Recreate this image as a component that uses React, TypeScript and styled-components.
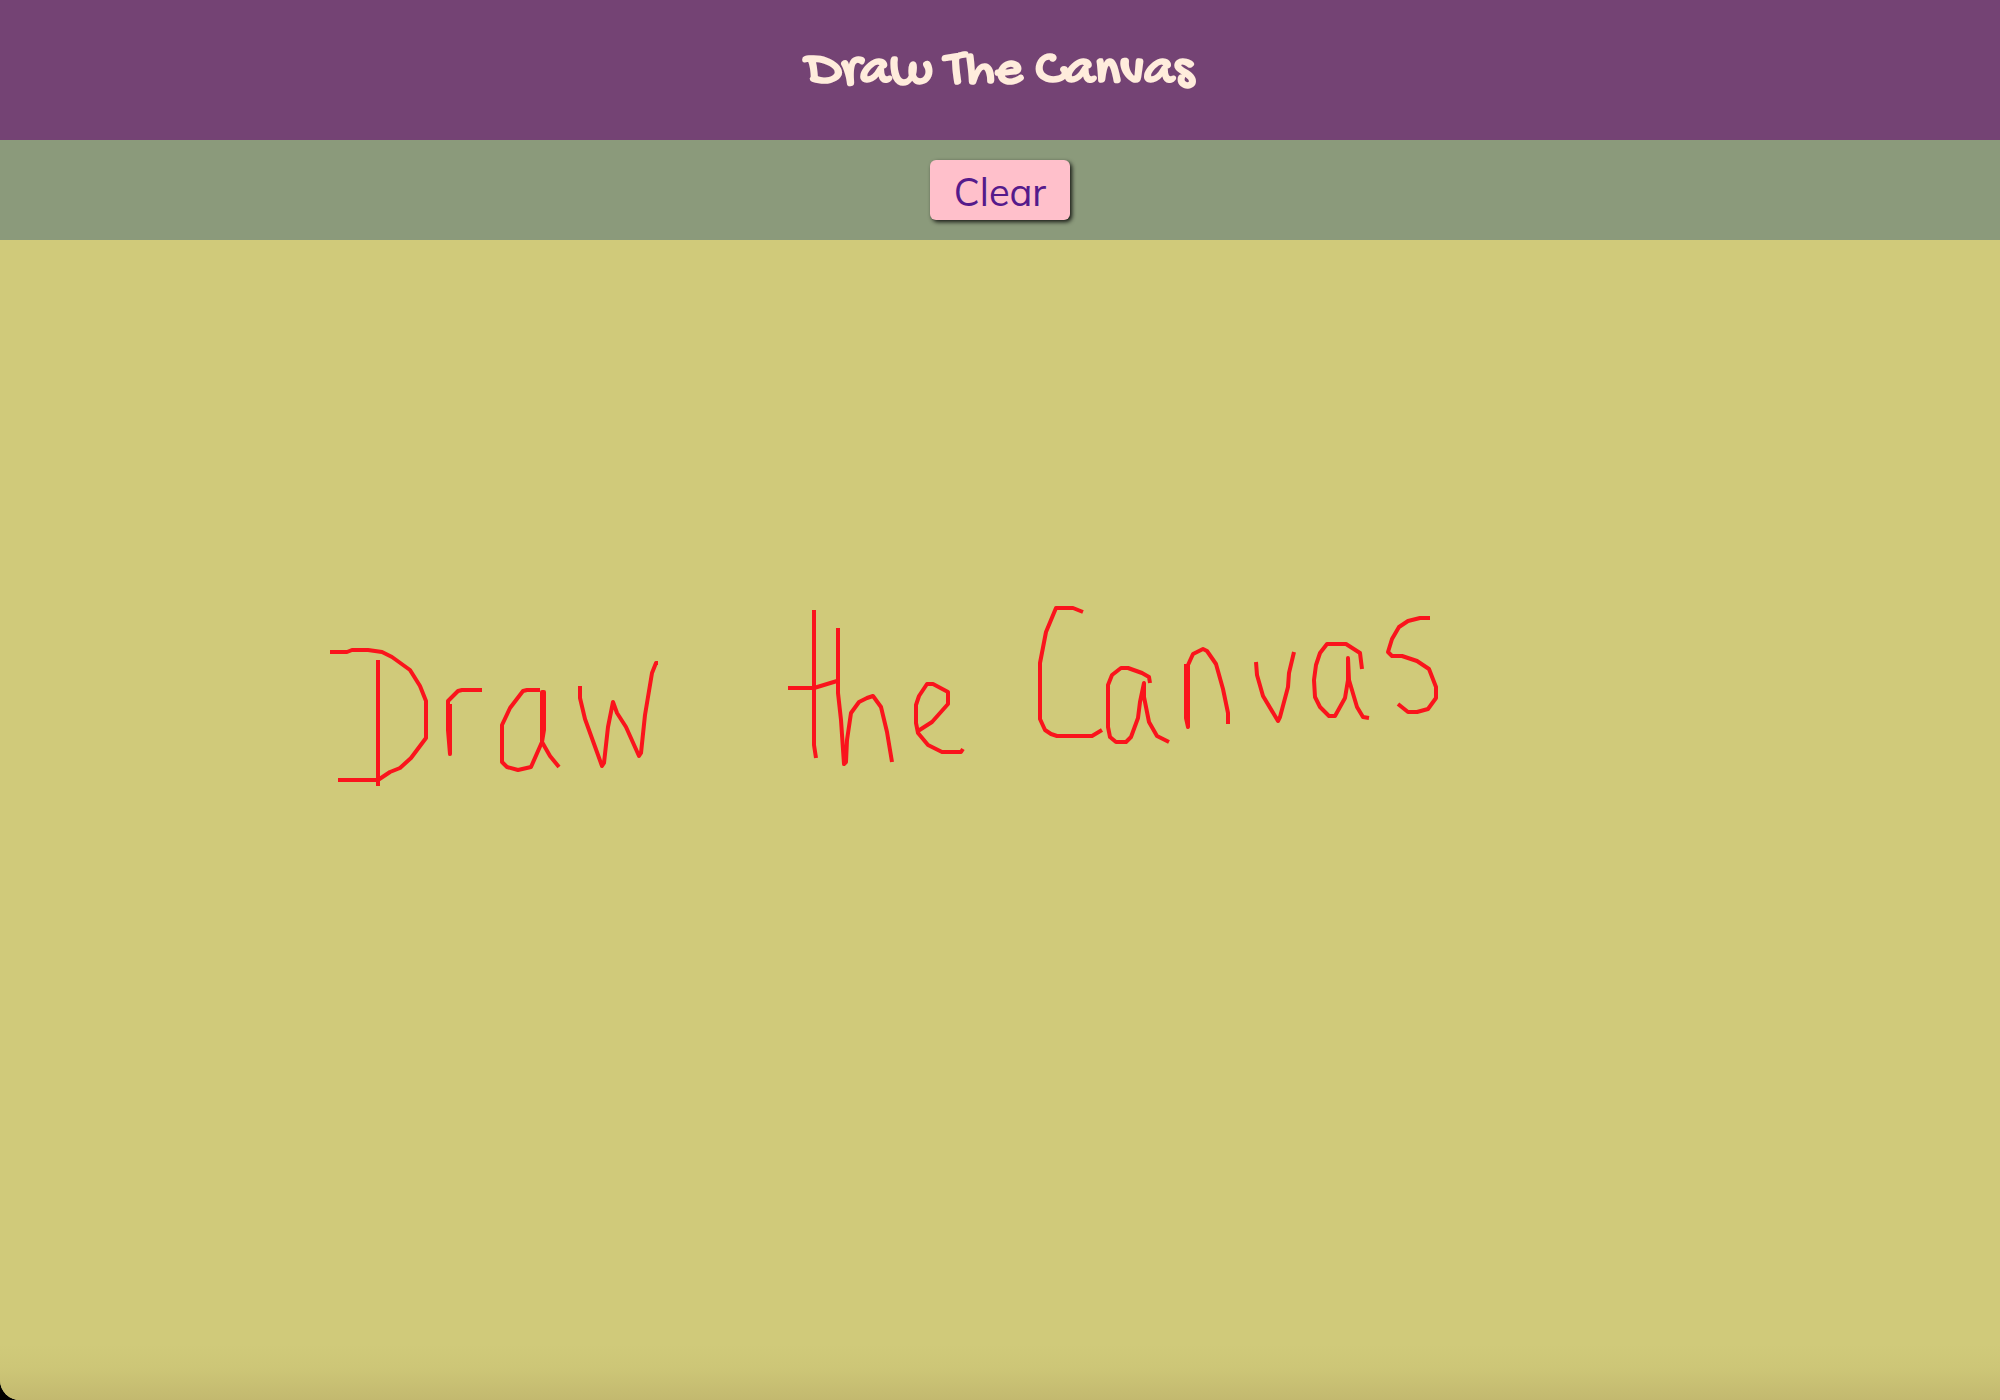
import React, { useRef, useState } from 'react';
import styled, { createGlobalStyle } from 'styled-components';

const GlobalStyle = createGlobalStyle`
  *, *::before, *::after { box-sizing: border-box; }
  body { margin: 0; background: #000; }
`;

const Page = styled.div`
  display: flex;
  flex-direction: column;
  min-height: 100vh;
  overflow: hidden;
  border-bottom-left-radius: 20px;
  background: #d0ca7a;
`;

const Header = styled.header`
  display: flex;
  justify-content: center;
  padding: 42px 24px 38px;
  background: #744374;
`;

const Title = styled.h1`
  margin: 0;
  color: #ffecdc;
  font-family: 'Gochi Hand', 'DejaVu Sans', sans-serif;
  font-size: 54px;
  font-weight: 700;
  line-height: 60px;
`;

const Toolbar = styled.div`
  display: flex;
  justify-content: center;
  padding: 20px;
  background: #8b9a7b;
`;

const ClearButton = styled.button`
  padding: 4px 24px 0;
  border: 0;
  border-radius: 6px;
  background: #ffc0cb;
  box-shadow: 2px 2px 4px rgba(0, 0, 0, 0.85);
  color: #551a8b;
  font-family: Mulish, Lato, sans-serif;
  font-size: 38px;
  line-height: 56px;
  cursor: pointer;
`;

const Board = styled.main`
  display: flex;
  flex: 1;
  background: linear-gradient(to top, #c3b96f, #cdc677 32px, #d0ca7a 56px);
`;

const Drawing = styled.svg`
  flex: 1;
  min-width: 0;
  overflow: hidden;
  touch-action: none;
  cursor: crosshair;
`;

const Stroke = styled.polyline`
  fill: none;
  stroke: #fa141c;
  stroke-width: 4px;
  stroke-linejoin: round;
`;

const sketch: string[] = [
  // D
  '330,412 347,412 352,410 368,410 382,412 392,417 410,430 420,446 426,461 426,498 411,518 400,528 390,532 378,540 338,540',
  '378,420 378,546',
  // r
  '482,450 462,450 458,451 454,455 448,461 448,490 450,514 450,464',
  // a
  '540,450 527,450 523,451 510,468 502,485 502,522 507,527 518,530 531,527 542,502 544,490 544,452 542,452 542,502 550,516 559,527',
  // w
  '580,446 580,458 585,479 602,526 604,523 608,487 613,462 617,473 626,487 639,516 641,513 645,475 652,433 656,423 658,423',
  // t
  '814,370 814,505 816,518',
  '788,448 814,448 837,441',
  // h
  '838,388 838,453 841,480 844,524 846,522 847,500 851,473 859,462 867,458 873,456 881,467 887,492 892,522',
  // e
  '918,491 932,482 948,464 948,452 933,444 927,444 919,456 916,465 916,483 918,493 928,505 942,512 961,512 963,509',
  // C
  '1083,372 1073,368 1056,368 1046,392 1040,423 1040,479 1045,490 1051,494 1057,496 1092,496 1102,490',
  // a
  '1150,443 1149,437 1142,433 1128,428 1121,428 1112,435 1108,445 1108,487 1110,497 1116,502 1126,502 1131,497 1138,478 1140,462 1144,443 1144,457 1149,482 1157,496 1169,502',
  // n
  '1186,424 1186,478 1188,487 1188,425 1193,414 1203,409 1207,411 1216,424 1223,449 1228,473 1228,484',
  // v
  '1256,422 1257,435 1263,456 1278,481 1280,477 1288,447 1289,433 1294,412',
  // a
  '1362,429 1360,413 1346,404 1327,404 1320,413 1316,425 1314,440 1315,457 1320,467 1329,476 1335,476 1345,458 1348,440 1348,418 1349,440 1357,467 1363,477 1369,478',
  // s
  '1430,378 1420,378 1408,381 1399,387 1392,399 1388,412 1392,416 1402,416 1417,421 1429,429 1436,447 1436,458 1428,469 1417,472 1408,472 1398,464',
];

export default function App() {
  const [strokes, setStrokes] = useState<string[]>(sketch);
  const drawing = useRef(false);

  const pointAt = (event: React.PointerEvent<SVGSVGElement>) => {
    const box = event.currentTarget.getBoundingClientRect();
    return `${Math.round(event.clientX - box.left)},${Math.round(event.clientY - box.top)}`;
  };

  const start = (event: React.PointerEvent<SVGSVGElement>) => {
    drawing.current = true;
    const point = pointAt(event);
    setStrokes((all) => [...all, point]);
  };

  const move = (event: React.PointerEvent<SVGSVGElement>) => {
    if (!drawing.current) return;
    const point = pointAt(event);
    setStrokes((all) => [...all.slice(0, -1), `${all[all.length - 1]} ${point}`]);
  };

  const stop = () => {
    drawing.current = false;
  };

  return (
    <>
      <GlobalStyle />
      <Page>
        <Header>
          <Title>Draw The Canvas</Title>
        </Header>
        <Toolbar>
          <ClearButton type="button" onClick={() => setStrokes([])}>
            Clear
          </ClearButton>
        </Toolbar>
        <Board>
          <Drawing onPointerDown={start} onPointerMove={move} onPointerUp={stop} onPointerLeave={stop}>
            {strokes.map((points, index) => (
              <Stroke key={index} points={points} />
            ))}
          </Drawing>
        </Board>
      </Page>
    </>
  );
}
